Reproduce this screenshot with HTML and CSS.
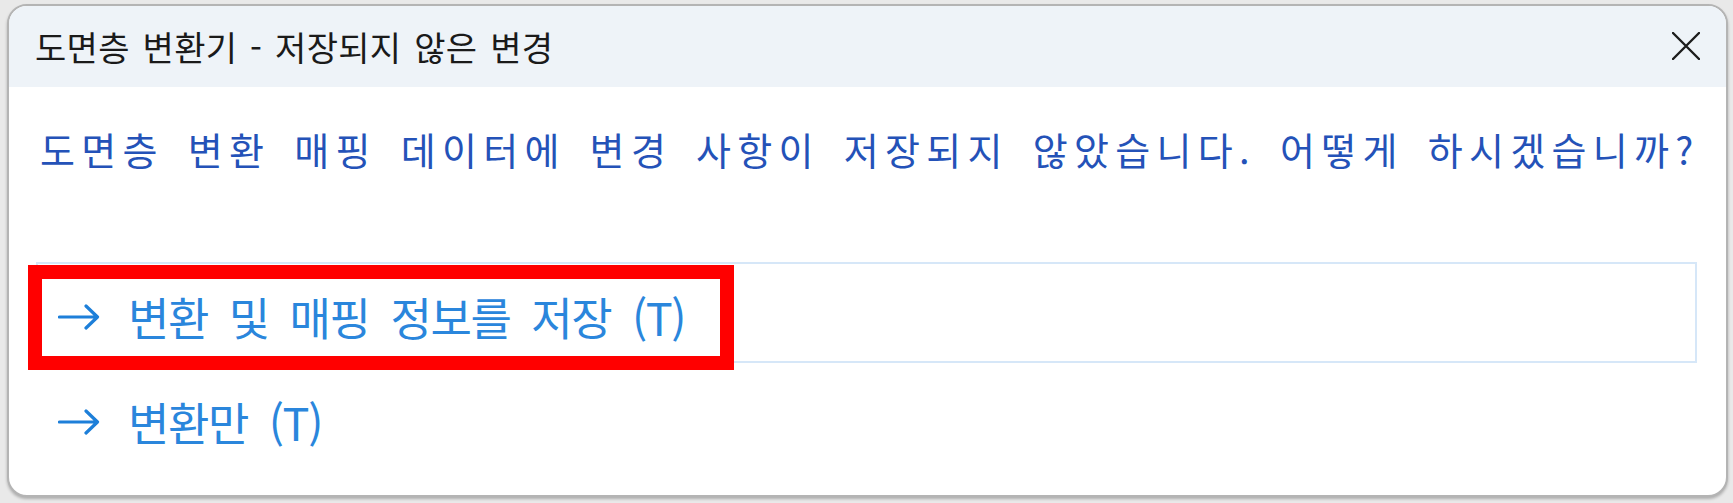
FILE: index.html
```html
<!DOCTYPE html>
<html lang="ko">
<head>
    <meta charset="UTF-8">
    <title>도면층 변환기 - 저장되지 않은 변경</title>
    <link rel="stylesheet" href="styles.css">
</head>
<body>
    <div class="dialog">
        <div class="dialog-title">
            <span class="title-text">도면층 변환기 - 저장되지 않은 변경</span>
            <button class="btn-close" type="button" aria-label="닫기">
                <svg width="28" height="28" viewBox="0 0 28 28">
                    <path d="M1 1 L27 27 M27 1 L1 27" stroke="#1c1c1c" stroke-width="2.4" stroke-linecap="round" fill="none"/>
                </svg>
            </button>
        </div>

        <div class="dialog-body">
            <p class="message">도면층 변환 매핑 데이터에 변경 사항이 저장되지 않았습니다. 어떻게 하시겠습니까?</p>

            <div class="options">
                <div class="option option-focus">
                    <svg class="arrow" width="42" height="26" viewBox="0 0 42 26">
                        <path d="M1.5 13 H39 M28 2 L39.5 13 L28 24" stroke="#1d7fd9" stroke-width="3.2" stroke-linecap="round" stroke-linejoin="round" fill="none"/>
                    </svg>
                    <span class="option-text">변환 및 매핑 정보를 저장 (T)</span>
                    <div class="highlight"></div>
                </div>
                <div class="option">
                    <svg class="arrow" width="42" height="26" viewBox="0 0 42 26">
                        <path d="M1.5 13 H39 M28 2 L39.5 13 L28 24" stroke="#1d7fd9" stroke-width="3.2" stroke-linecap="round" stroke-linejoin="round" fill="none"/>
                    </svg>
                    <span class="option-text">변환만 (T)</span>
                </div>
            </div>
        </div>
    </div>
</body>
</html>
```

FILE: styles.css
```css
html, body {
    margin: 0;
    height: 100%;
}
body {
    background: #e9e9e9;
    padding: 4px 5px 6px 7px;
    box-sizing: border-box;
    font-family: "Noto Sans CJK KR", "Noto Sans", sans-serif;
}
.dialog {
    height: 100%;
    background: #ffffff;
    border: 2px solid #b4b4b4;
    border-radius: 20px;
    box-shadow: 0 2px 3px rgba(0,0,0,0.25);
    overflow: hidden;
    box-sizing: border-box;
}
.dialog-title {
    height: 81px;
    background: #eef3f8;
    display: flex;
    align-items: center;
    justify-content: space-between;
    padding: 0 26px 0 26px;
}
.title-text {
    font-size: 34px;
    line-height: 40px;
    letter-spacing: 0.3px;
    word-spacing: 3px;
    color: #1a1a1a;
}
.btn-close {
    background: none;
    border: none;
    padding: 0;
    width: 28px;
    height: 28px;
    margin-top: -2px;
    cursor: pointer;
}
.btn-close svg {
    display: block;
}
.dialog-body {
    padding: 39px 29px 0 27px;
}
.message {
    margin: 0 0 0 4px;
    font-size: 38px;
    line-height: 46px;
    letter-spacing: 6.3px;
    word-spacing: 7px;
    color: #2452b8;
    white-space: nowrap;
}
.options {
    margin-top: 90px;
    display: flex;
    flex-direction: column;
    gap: 4px;
}
.option {
    position: relative;
    height: 101px;
    display: flex;
    align-items: center;
    padding: 8px 0 0 20px;
    box-sizing: border-box;
    border: 2px solid transparent;
}
.option-focus {
    border-color: #d6e7f8;
}
.arrow {
    display: block;
    flex: none;
    margin-right: 28px;
}
.option-text {
    font-size: 45px;
    line-height: 52px;
    letter-spacing: -1.4px;
    word-spacing: 9.6px;
    color: #2a86dc;
}
.highlight {
    position: absolute;
    left: -10px;
    top: 1px;
    width: 706px;
    height: 105px;
    border: 14px solid #ff0000;
    box-sizing: border-box;
}
```
